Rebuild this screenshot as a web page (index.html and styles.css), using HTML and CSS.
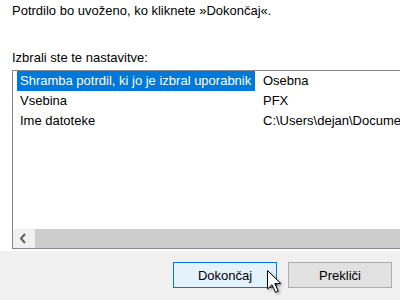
FILE: index.html
```html
<!DOCTYPE html>
<html lang="sl">
<head>
    <meta charset="UTF-8">
    <title>Čarovnik za uvoz potrdil</title>
    <link rel="stylesheet" href="styles.css">
</head>
<body>
<div class="page">
    <p class="intro">Potrdilo bo uvoženo, ko kliknete »Dokončaj«.</p>
    <p class="label">Izbrali ste te nastavitve:</p>

    <div class="list">
        <div class="rows">
            <div class="row">
                <span class="c1 sel">Shramba potrdil, ki jo je izbral uporabnik</span>
                <span class="c2">Osebna</span>
            </div>
            <div class="row">
                <span class="c1">Vsebina</span>
                <span class="c2">PFX</span>
            </div>
            <div class="row">
                <span class="c1">Ime datoteke</span>
                <span class="c2">C:\Users\dejan\Documents\potrdilo.pfx</span>
            </div>
        </div>
        <div class="hscroll">
            <span class="arrow">
                <svg width="22" height="19" viewBox="0 0 22 19">
                    <polyline points="12,5 8,9.5 12,14" fill="none" stroke="#606060" stroke-width="2"/>
                </svg>
            </span>
            <span class="thumb"></span>
        </div>
    </div>

    <div class="footer">
        <button class="btn default">Dokončaj</button>
        <button class="btn">Prekliči</button>
    </div>
</div>

<!-- kazalec miške nad gumbom -->
<svg class="cursor" width="20" height="28" viewBox="0 0 20 28">
    <defs>
        <filter id="sh" x="-50%" y="-50%" width="200%" height="200%">
            <feGaussianBlur stdDeviation="1.4"/>
        </filter>
    </defs>
    <polygon points="3,3 3,22 7.5,17.5 11,25 14,23.6 10.6,16.3 16.8,16.3" fill="#000" opacity="0.45" filter="url(#sh)"/>
    <polygon points="1.5,1.5 1.5,20 6,15.8 9.5,23.3 12.2,22 8.8,14.6 14.8,14.6" fill="#fff" stroke="#000" stroke-width="1" stroke-linejoin="miter"/>
</svg>
</body>
</html>
```

FILE: styles.css
```css
*{
    margin: 0;
    padding: 0;
    box-sizing: border-box;
}
html, body{
    width: 400px;
    height: 300px;
    overflow: hidden;
    background: #fff;
    font: 13px/20px "Liberation Sans", Arial, sans-serif;
    color: #000;
}
.page{
    height: 300px;
    display: flex;
    flex-direction: column;
}
.intro{
    margin: 1px 0 0 12px;
}
.label{
    margin: 27px 0 0 12px;
}
.list{
    margin: 2px 0 0 12px;
    width: 420px;
    border: 1px solid #828790;
    background: #fff;
}
.rows{
    height: 158px;
    padding-left: 4px;
}
.row{
    display: flex;
    height: 20px;
    white-space: nowrap;
    overflow: hidden;
}
.row .c1{
    flex: none;
    width: 238px;
    padding-left: 3px;
    overflow: hidden;
}
.row .c1.sel{
    background: #0078d7;
    color: #fff;
}
.row .c2{
    flex: none;
    margin-left: 8px;
}
.hscroll{
    display: flex;
    height: 19px;
    background: #f0f0f0;
}
.hscroll .arrow{
    width: 22px;
    display: block;
}
.hscroll .thumb{
    flex: 1;
    background: #cdcdcd;
}
.footer{
    margin-top: 2px;
    flex: 1;
    background: #f0f0f0;
    display: flex;
    justify-content: flex-end;
    align-items: flex-start;
    gap: 11px;
    padding: 11px 8px 0 0;
}
.btn{
    width: 104px;
    height: 26px;
    font: 13px "Liberation Sans", Arial, sans-serif;
    color: #000;
    background: #e1e1e1;
    border: 1px solid #adadad;
}
.btn.default{
    background: #e5f1fb;
    border-color: #0078d7;
}
.cursor{
    position: absolute;
    left: 266px;
    top: 269px;
}
```
